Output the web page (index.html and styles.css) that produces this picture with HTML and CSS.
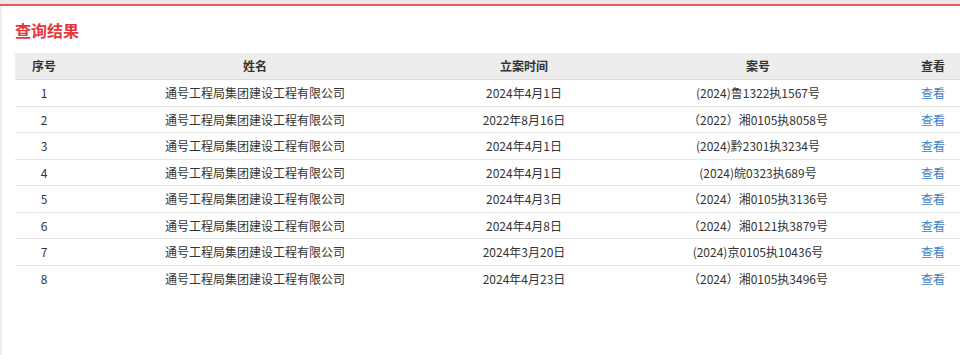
FILE: index.html
```html
<!DOCTYPE html>
<html lang="zh">
<head>
<meta charset="utf-8">
<link rel="stylesheet" href="styles.css">
</head>
<body>
<div class="topbar"></div>
<div class="page">
  <h2 class="title">查询结果</h2>
  <table class="result">
    <colgroup>
      <col class="c1"><col class="c2"><col class="c3"><col class="c4"><col class="c5">
    </colgroup>
    <thead>
      <tr><th>序号</th><th>姓名</th><th>立案时间</th><th>案号</th><th>查看</th></tr>
    </thead>
    <tbody>
      <tr><td>1</td><td>通号工程局集团建设工程有限公司</td><td>2024年4月1日</td><td>(2024)鲁1322执1567号</td><td><a class="view">查看</a></td></tr>
      <tr><td>2</td><td>通号工程局集团建设工程有限公司</td><td>2022年8月16日</td><td>（2022）湘0105执8058号</td><td><a class="view">查看</a></td></tr>
      <tr><td>3</td><td>通号工程局集团建设工程有限公司</td><td>2024年4月1日</td><td>(2024)黔2301执3234号</td><td><a class="view">查看</a></td></tr>
      <tr><td>4</td><td>通号工程局集团建设工程有限公司</td><td>2024年4月1日</td><td>(2024)皖0323执689号</td><td><a class="view">查看</a></td></tr>
      <tr><td>5</td><td>通号工程局集团建设工程有限公司</td><td>2024年4月3日</td><td>（2024）湘0105执3136号</td><td><a class="view">查看</a></td></tr>
      <tr><td>6</td><td>通号工程局集团建设工程有限公司</td><td>2024年4月8日</td><td>（2024）湘0121执3879号</td><td><a class="view">查看</a></td></tr>
      <tr><td>7</td><td>通号工程局集团建设工程有限公司</td><td>2024年3月20日</td><td>(2024)京0105执10436号</td><td><a class="view">查看</a></td></tr>
      <tr class="last"><td>8</td><td>通号工程局集团建设工程有限公司</td><td>2024年4月23日</td><td>（2024）湘0105执3496号</td><td><a class="view">查看</a></td></tr>
    </tbody>
  </table>
</div>
</body>
</html>
```
FILE: styles.css
```css
html, body {
  margin: 0;
  padding: 0;
  background: #fff;
  overflow: hidden;
}
body {
  font-family: "Noto Sans CJK SC", "Microsoft YaHei", sans-serif;
  font-size: 12px;
  color: #333;
  height: 355px;
}
.topbar {
  height: 4px;
  background: #ebe7e7;
  border-bottom: 2px solid #e8565a;
}
.page {
  border-left: 2px solid #ececec;
  padding: 0 0 0 13px;
  height: 349px;
  box-sizing: border-box;
  overflow: hidden;
}
.title {
  margin: 0;
  padding-top: 14px;
  height: 33px;
  font-size: 16px;
  line-height: 20px;
  font-weight: bold;
  color: #e8343b;
}
.result {
  width: 950px;
  border-collapse: collapse;
  table-layout: fixed;
}
.c1 { width: 58px; }
.c2 { width: 364px; }
.c3 { width: 174px; }
.c4 { width: 294px; }
.c5 { width: 60px; }
.result th {
  background: #eeeded;
  font-weight: bold;
  height: 26px;
  padding: 0;
  text-align: center;
  border-bottom: 1px solid #dcdcdc;
  line-height: 26px;
}
.result th:last-child, .result td:last-child {
  text-align: left;
  padding-left: 16px;
}
.result td {
  height: 25.5px;
  padding: 0;
  text-align: center;
  line-height: 25px;
  border-bottom: 1px solid #e4e4e4;
}
.result tr.last td {
  border-bottom: none;
}
.view {
  color: #3d7fc4;
  cursor: pointer;
}
```
